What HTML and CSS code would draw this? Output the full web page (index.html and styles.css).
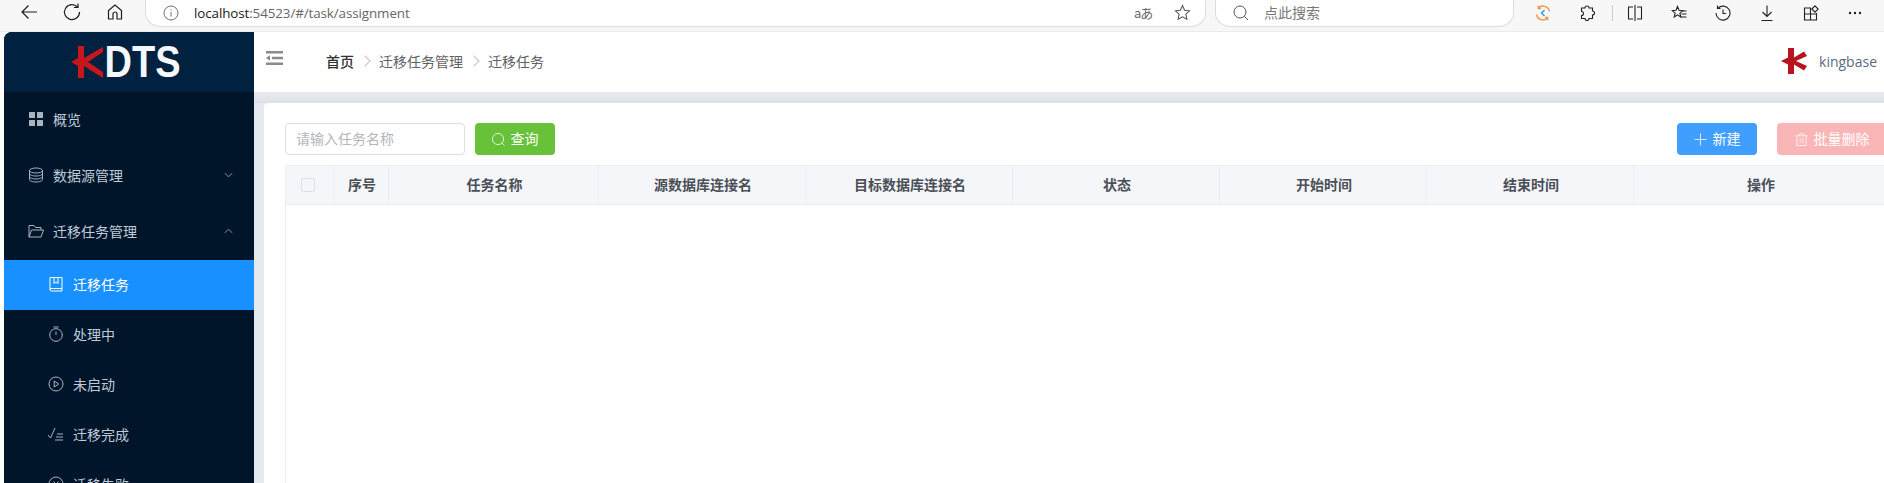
FILE: index.html
```html
<!DOCTYPE html>
<html lang="zh-CN">
<head>
<meta charset="utf-8">
<title>KDTS</title>
<link rel="stylesheet" href="styles.css">
</head>
<body>
<div class="browser">
  <div class="nav-icons">
    <svg class="bi" viewBox="0 0 20 20"><path d="M18 10H3M9.500 3.500L3 10l6.500 6.500"/></svg>
    <svg class="bi" viewBox="0 0 20 20"><path d="M15.500 5A7.500 7.500 0 1 0 17.500 10M16 1.500V5.500h-4"/></svg>
    <svg class="bi" viewBox="0 0 20 20"><path d="M3.500 17V8.500L10 3l6.500 5.500V17h-4.500v-5a2 2 0 0 0-4 0v5z"/></svg>
  </div>
  <div class="addr">
    <svg class="info" viewBox="0 0 16 16"><circle cx="8" cy="8" r="7"/><path d="M8 7v4.500M8 4.300v1.200"/></svg>
    <span class="url"><b>localhost</b>:54523/#/task/assignment</span>
    <span class="aa">aあ</span>
    <svg class="star" viewBox="0 0 16 16"><path d="M8 1.500l2 4.300 4.600.6-3.400 3.200.9 4.700L8 12l-4.100 2.300.9-4.700L1.400 6.400 6 5.800z"/></svg>
  </div>
  <div class="search">
    <svg class="sic" viewBox="0 0 16 16"><circle cx="7" cy="7" r="6"/><path d="M11.300 11.300L15 15"/></svg>
    <span>点此搜索</span>
  </div>
  <div class="tools">
    <svg class="ti" viewBox="0 0 16 16"><path class="or" d="M14.500 6.500A6.700 6.700 0 0 0 3 3.200M1.500 9.500A6.700 6.700 0 0 0 13 12.800M3.300 .8V3.500H6M12.700 15.200V12.500H10"/><path class="bl" d="M9.500 5L6.500 8l3 3"/></svg>
    <svg class="ti" viewBox="0 0 16 16"><path d="M6 3a2 2 0 0 1 4 0h3.500v3a2 2 0 0 1 0 4v3.500H10a2 2 0 0 1-4 0H2.500v-3a2 2 0 0 0 0-4V3z"/></svg>
    <span class="tsep"></span>
    <svg class="ti" viewBox="0 0 16 16"><path d="M8 0v16M6 2H1.500v12H6M10 2h4.500v12H10"/></svg>
    <svg class="ti" viewBox="0 0 16 16"><path d="M6.500 1.500l1.500 3.800 3.800.3-2.900 2.500.9 3.900-3.300-2.100-3.300 2.100.9-3.900L1.200 5.600 5 5.300zM11 6h4.500M10.500 9h5M9.500 12h6"/></svg>
    <svg class="ti" viewBox="0 0 16 16"><path d="M3 3.200a7 7 0 1 1-2 4.800M2.500 .5V3.500h3M8 4.500V8.500h3"/></svg>
    <svg class="ti" viewBox="0 0 16 16"><path d="M8 .5V11.500M3.500 7l4.500 4.500L12.500 7M2.500 15.500h11"/></svg>
    <svg class="ti" viewBox="0 0 16 16"><path d="M8 3H1.500v12h12V8M1.500 9h12M7.500 3v12M12 .8l3.200 3.200L12 7.200 8.800 4z"/></svg>
    <svg class="ti dots" viewBox="0 0 16 16"><circle cx="3" cy="8" r="1.200"/><circle cx="8" cy="8" r="1.200"/><circle cx="13" cy="8" r="1.200"/></svg>
  </div>
</div>

<div class="app">
  <aside class="sidebar">
    <div class="logo">
      <svg class="logo-k" viewBox="0 0 32 32"><path d="M7 0h6v12L32 1v5L17 16l15 10v6L13 20v12H7V20L0 16l7-4z"/></svg>
      <span class="logo-t">DTS</span>
    </div>
    <nav class="menu">
      <a class="mi mi-top">
        <svg class="mic" viewBox="0 0 16 16"><rect class="fill" x="1" y="1" width="6" height="6" rx=".5"/><rect class="fill" x="9" y="1" width="6" height="6" rx=".5"/><rect class="fill" x="1" y="9" width="6" height="6" rx=".5"/><rect class="fill" x="9" y="9" width="6" height="6" rx=".5"/></svg>
        <span>概览</span>
      </a>
      <a class="mi mi-top">
        <svg class="mic" viewBox="0 0 16 16"><ellipse cx="8" cy="3.500" rx="6.500" ry="2.500"/><path d="M1.500 3.500v9c0 1.400 2.900 2.500 6.500 2.500s6.500-1.100 6.500-2.500v-9M1.500 6.500C1.500 7.900 4.400 9 8 9s6.500-1.100 6.500-2.500M1.500 9.500C1.500 10.900 4.400 12 8 12s6.500-1.100 6.500-2.500"/></svg>
        <span>数据源管理</span>
        <svg class="arrow" viewBox="0 0 10 6"><path d="M1 1l4 4 4-4"/></svg>
      </a>
      <a class="mi mi-top">
        <svg class="mic" viewBox="0 0 16 16"><path d="M1 14V2.500h5l1.500 2H13v2.500M1 14l2.500-7H15.500L13 14z"/></svg>
        <span>迁移任务管理</span>
        <svg class="arrow" viewBox="0 0 10 6"><path d="M1 5l4-4 4 4"/></svg>
      </a>
      <a class="mi mi-sub active">
        <svg class="mic" viewBox="0 0 16 16"><path d="M2 14V1.500h12V15H3.500A1.500 1.500 0 0 1 2 13.500zM2 12.500h12M6 1.500v6l2-1.500 2 1.500v-6"/></svg>
        <span>迁移任务</span>
      </a>
      <a class="mi mi-sub">
        <svg class="mic" viewBox="0 0 16 16"><circle cx="8" cy="9" r="6.300"/><path d="M8 5.500V9M5.500 1h5"/></svg>
        <span>处理中</span>
      </a>
      <a class="mi mi-sub">
        <svg class="mic" viewBox="0 0 16 16"><circle cx="8" cy="8" r="7"/><path d="M6.200 5v6l4.500-3z"/></svg>
        <span>未启动</span>
      </a>
      <a class="mi mi-sub">
        <svg class="mic" viewBox="0 0 16 16"><path d="M0 9l2.500 3L7 2M9 8h6M8 11h7M7 14h8"/></svg>
        <span>迁移完成</span>
      </a>
      <a class="mi mi-sub">
        <svg class="mic" viewBox="0 0 16 16"><circle cx="8" cy="8" r="7"/><path d="M5.500 5.500l5 5M10.500 5.500l-5 5"/></svg>
        <span>迁移失败</span>
      </a>
    </nav>
  </aside>

  <main class="main">
    <header class="topbar">
      <svg class="fold" viewBox="0 0 17 14"><path d="M0 0h17v2.500H0zM6 5.700h11v2.500H6zM0 11.500h17V14H0zM0 7l4-2.800v5.600z"/></svg>
      <div class="crumbs">
        <b>首页</b><i class="sep"></i><span>迁移任务管理</span><i class="sep"></i><span>迁移任务</span>
      </div>
      <div class="user">
        <svg class="user-k" viewBox="0 0 26 26"><path d="M7 0h6v9.500L23 3.500l3 4.500-11 5 11 5-3 4.500-10-6V26H7V16.500L0 13l7-3.500z"/></svg>
        <span>kingbase</span>
      </div>
    </header>
    <section class="strip">
      <div class="card">
        <div class="toolbar">
          <div class="input">请输入任务名称</div>
          <button class="btn green">
            <svg class="bic" viewBox="0 0 14 14"><circle cx="6.500" cy="6.500" r="6"/><path d="M11 11L13.500 13.500"/></svg>查询
          </button>
          <button class="btn blue push">
            <svg class="bic" viewBox="0 0 14 14"><path d="M7 .5v13M.5 7h13"/></svg>新建
          </button>
          <button class="btn pink">
            <svg class="bic" viewBox="0 0 14 14"><path d="M.5 3h13M5 3V.8h4V3M2 3v10.500h10V3M5.500 5.500v5.500M8.500 5.500v5.500"/></svg>批量删除
          </button>
        </div>
        <div class="table">
          <div class="th c-check"><span class="checkbox"></span></div>
          <div class="th c-no">序号</div>
          <div class="th c-name">任务名称</div>
          <div class="th c-w">源数据库连接名</div>
          <div class="th c-w">目标数据库连接名</div>
          <div class="th c-w">状态</div>
          <div class="th c-w">开始时间</div>
          <div class="th c-w">结束时间</div>
          <div class="th c-op">操作</div>
        </div>
        <div class="tbody"></div>
      </div>
    </section>
  </main>
</div>
</body>
</html>
```
FILE: styles.css
```css
* { box-sizing: border-box; }
html, body { margin: 0; height: 100%; overflow: hidden; background: #fff; }
body { font-family: "Noto Sans CJK SC", "Liberation Sans", sans-serif; font-size: 14px; display: flex; flex-direction: column; }
svg { fill: none; stroke: currentColor; flex: none; display: block; }

.browser { height: 32px; background: #f7f7f7; border-bottom: 1px solid #ececec; display: flex; align-items: flex-start; flex: none; }
.nav-icons { display: flex; width: 145px; flex: none; padding-left: 19px; gap: 23px; padding-top: 2px; color: #1d1d1d; }
.bi { width: 20px; height: 20px; stroke-width: 1.200; }
.addr { width: 1061px; flex: none; height: 27px; background: #fff; border: 1px solid #dcdcdc; border-top: 0; border-radius: 0 0 16px 16px / 0 0 14px 14px; display: flex; align-items: center; padding: 0 0 1px 17px; }
.info { width: 16px; height: 16px; stroke-width: 1; color: #707070; }
.url { font-family: "Open Sans", sans-serif; font-size: 13.400px; margin-left: 15px; flex: 1; color: #666; letter-spacing: -0.100px; white-space: nowrap; }
.url b { font-weight: 400; color: #1a1a1a; }
.aa { font-size: 13px; color: #666; width: 40px; letter-spacing: -1px; flex: none; }
.star { width: 17px; height: 17px; margin-right: 14px; stroke-width: 1; color: #555; }
.search { width: 299px; flex: none; height: 27px; margin-left: 9px; background: #fff; border: 1px solid #dcdcdc; border-top: 0; border-radius: 0 0 16px 16px / 0 0 14px 14px; display: flex; align-items: center; gap: 15px; padding: 0 0 3px 17px; color: #777; }
.sic { width: 16px; height: 16px; stroke-width: 1; color: #555; margin-top: 2px; }
.tools { flex: 1; display: flex; align-items: center; height: 25px; padding-left: 21px; color: #222; }
.ti { width: 16px; height: 16px; stroke-width: 1.100; margin-right: 28px; }
.or { stroke: #f0994a; stroke-width: 1.400; }
.bl { stroke: #2b95e8; stroke-width: 1.400; }
.tsep { width: 1px; height: 16px; background: #ccc; margin: 0 14px 0 -11px; flex: none; }
.dots { fill: #222; stroke: none; margin-right: 0; }

.app { flex: 1; min-height: 0; display: flex; padding-left: 4px; background: #fff; }

.sidebar { width: 250px; flex: none; background: #001529; border-radius: 8px 0 0 0; overflow: hidden; }
.logo { height: 60px; background: #002140; display: flex; align-items: center; justify-content: center; gap: 2px; padding-right: 7px; }
.logo-k { width: 32px; height: 32px; fill: #c8161d; stroke: none; }
.logo-t { font-family: "Liberation Sans", sans-serif; font-weight: 700; font-size: 38px; line-height: 32px; color: #f5f7fa; transform: scaleY(1.150); }
.menu { display: flex; flex-direction: column; }
.mi { display: flex; align-items: center; color: #bfcbd9; font-size: 14px; flex: none; padding-bottom: 2px; }
.mi-top { height: 56px; padding-left: 24px; }
.mi-sub { height: 50px; padding-left: 44px; }
.mi .mic { width: 16px; height: 16px; margin-right: 9px; stroke-width: 1; color: #a9b4c0; }
.mi .mic .fill { fill: #a9b4c0; stroke: none; }
.mi .arrow { width: 9px; height: 6px; margin-left: auto; margin-right: 21px; stroke-width: 1; color: #9aa5b1; }
.mi.active { background: #1890ff; color: #fff; }
.mi.active .mic { color: #fff; }

.main { flex: 1; min-width: 0; display: flex; flex-direction: column; background: #fff; }
.topbar { height: 60px; flex: none; display: flex; align-items: center; background: #fff; padding: 0 6px 2px 12px; }
.fold { width: 17px; height: 14px; fill: #8a8a8a; stroke: none; margin-bottom: 6px; }
.crumbs { display: flex; align-items: center; margin-left: 43px; color: #606266; gap: 8px; }
.crumbs b { font-weight: 500; color: #303133; }
.sep { width: 8px; height: 8px; border-top: 1px solid #c0c4cc; border-right: 1px solid #c0c4cc; transform: rotate(45deg); margin-left: -1px; margin-right: 2px; }
.user { margin-left: auto; display: flex; align-items: center; gap: 12px; color: #5a6b80; font-family: "Open Sans", sans-serif; font-size: 14px; white-space: nowrap; padding-right: 1px; }
.user-k { width: 26px; height: 26px; fill: #b7141f; stroke: none; }

.strip { flex: 1; min-height: 0; min-width: 0; background: linear-gradient(#e8ebef, #dde1e5 11px, #e5e8ec 11px); padding: 11px 0 0 10px; }
.card { height: 100%; background: #fff; border-radius: 4px 0 0 0; padding: 20px 0 0 21px; display: flex; flex-direction: column; overflow: hidden; }
.toolbar { display: flex; align-items: center; gap: 10px; height: 32px; width: 1602px; flex: none; }
.input { width: 180px; height: 32px; border: 1px solid #dcdfe6; border-radius: 4px; color: #b3b6bd; display: flex; align-items: center; padding: 0 0 2px 10px; background: #fff; }
.btn { font-family: inherit; font-size: 14px; height: 32px; border: 0; border-radius: 4px; display: flex; align-items: center; justify-content: center; gap: 6px; color: #fff; font-weight: 400; padding: 0 0 2px; flex: none; }
.btn .bic { width: 13px; height: 13px; stroke-width: 1; color: #fff; margin-top: 2px; opacity: .85; }
.green { width: 80px; background: #67c23a; }
.blue { width: 80px; background: #409eff; }
.pink { width: 110px; background: #fab6b6; margin-left: 10px; }
.push { margin-left: auto; }
.table { display: flex; flex: none; width: 1602px; height: 40px; margin-top: 10px; background: #f5f6fa; border: 1px solid #ebeef5; border-right: 0; }
.th { display: flex; align-items: center; justify-content: center; border-right: 1px solid #ebeef5; font-weight: 700; color: #4a4f57; flex: none; padding: 0 0 2px 2px; }
.c-check { width: 48px; padding: 0 4px 0 0; }
.c-no { width: 55px; }
.c-name { width: 210px; }
.c-w { width: 207px; }
.c-op { width: 252px; border-right: 0; }
.checkbox { width: 14px; height: 14px; background: #f5f6fa; border: 1px solid #dcdfe6; border-radius: 2px; }
.tbody { flex: 1; border-left: 1px solid #ebeef5; }
```
